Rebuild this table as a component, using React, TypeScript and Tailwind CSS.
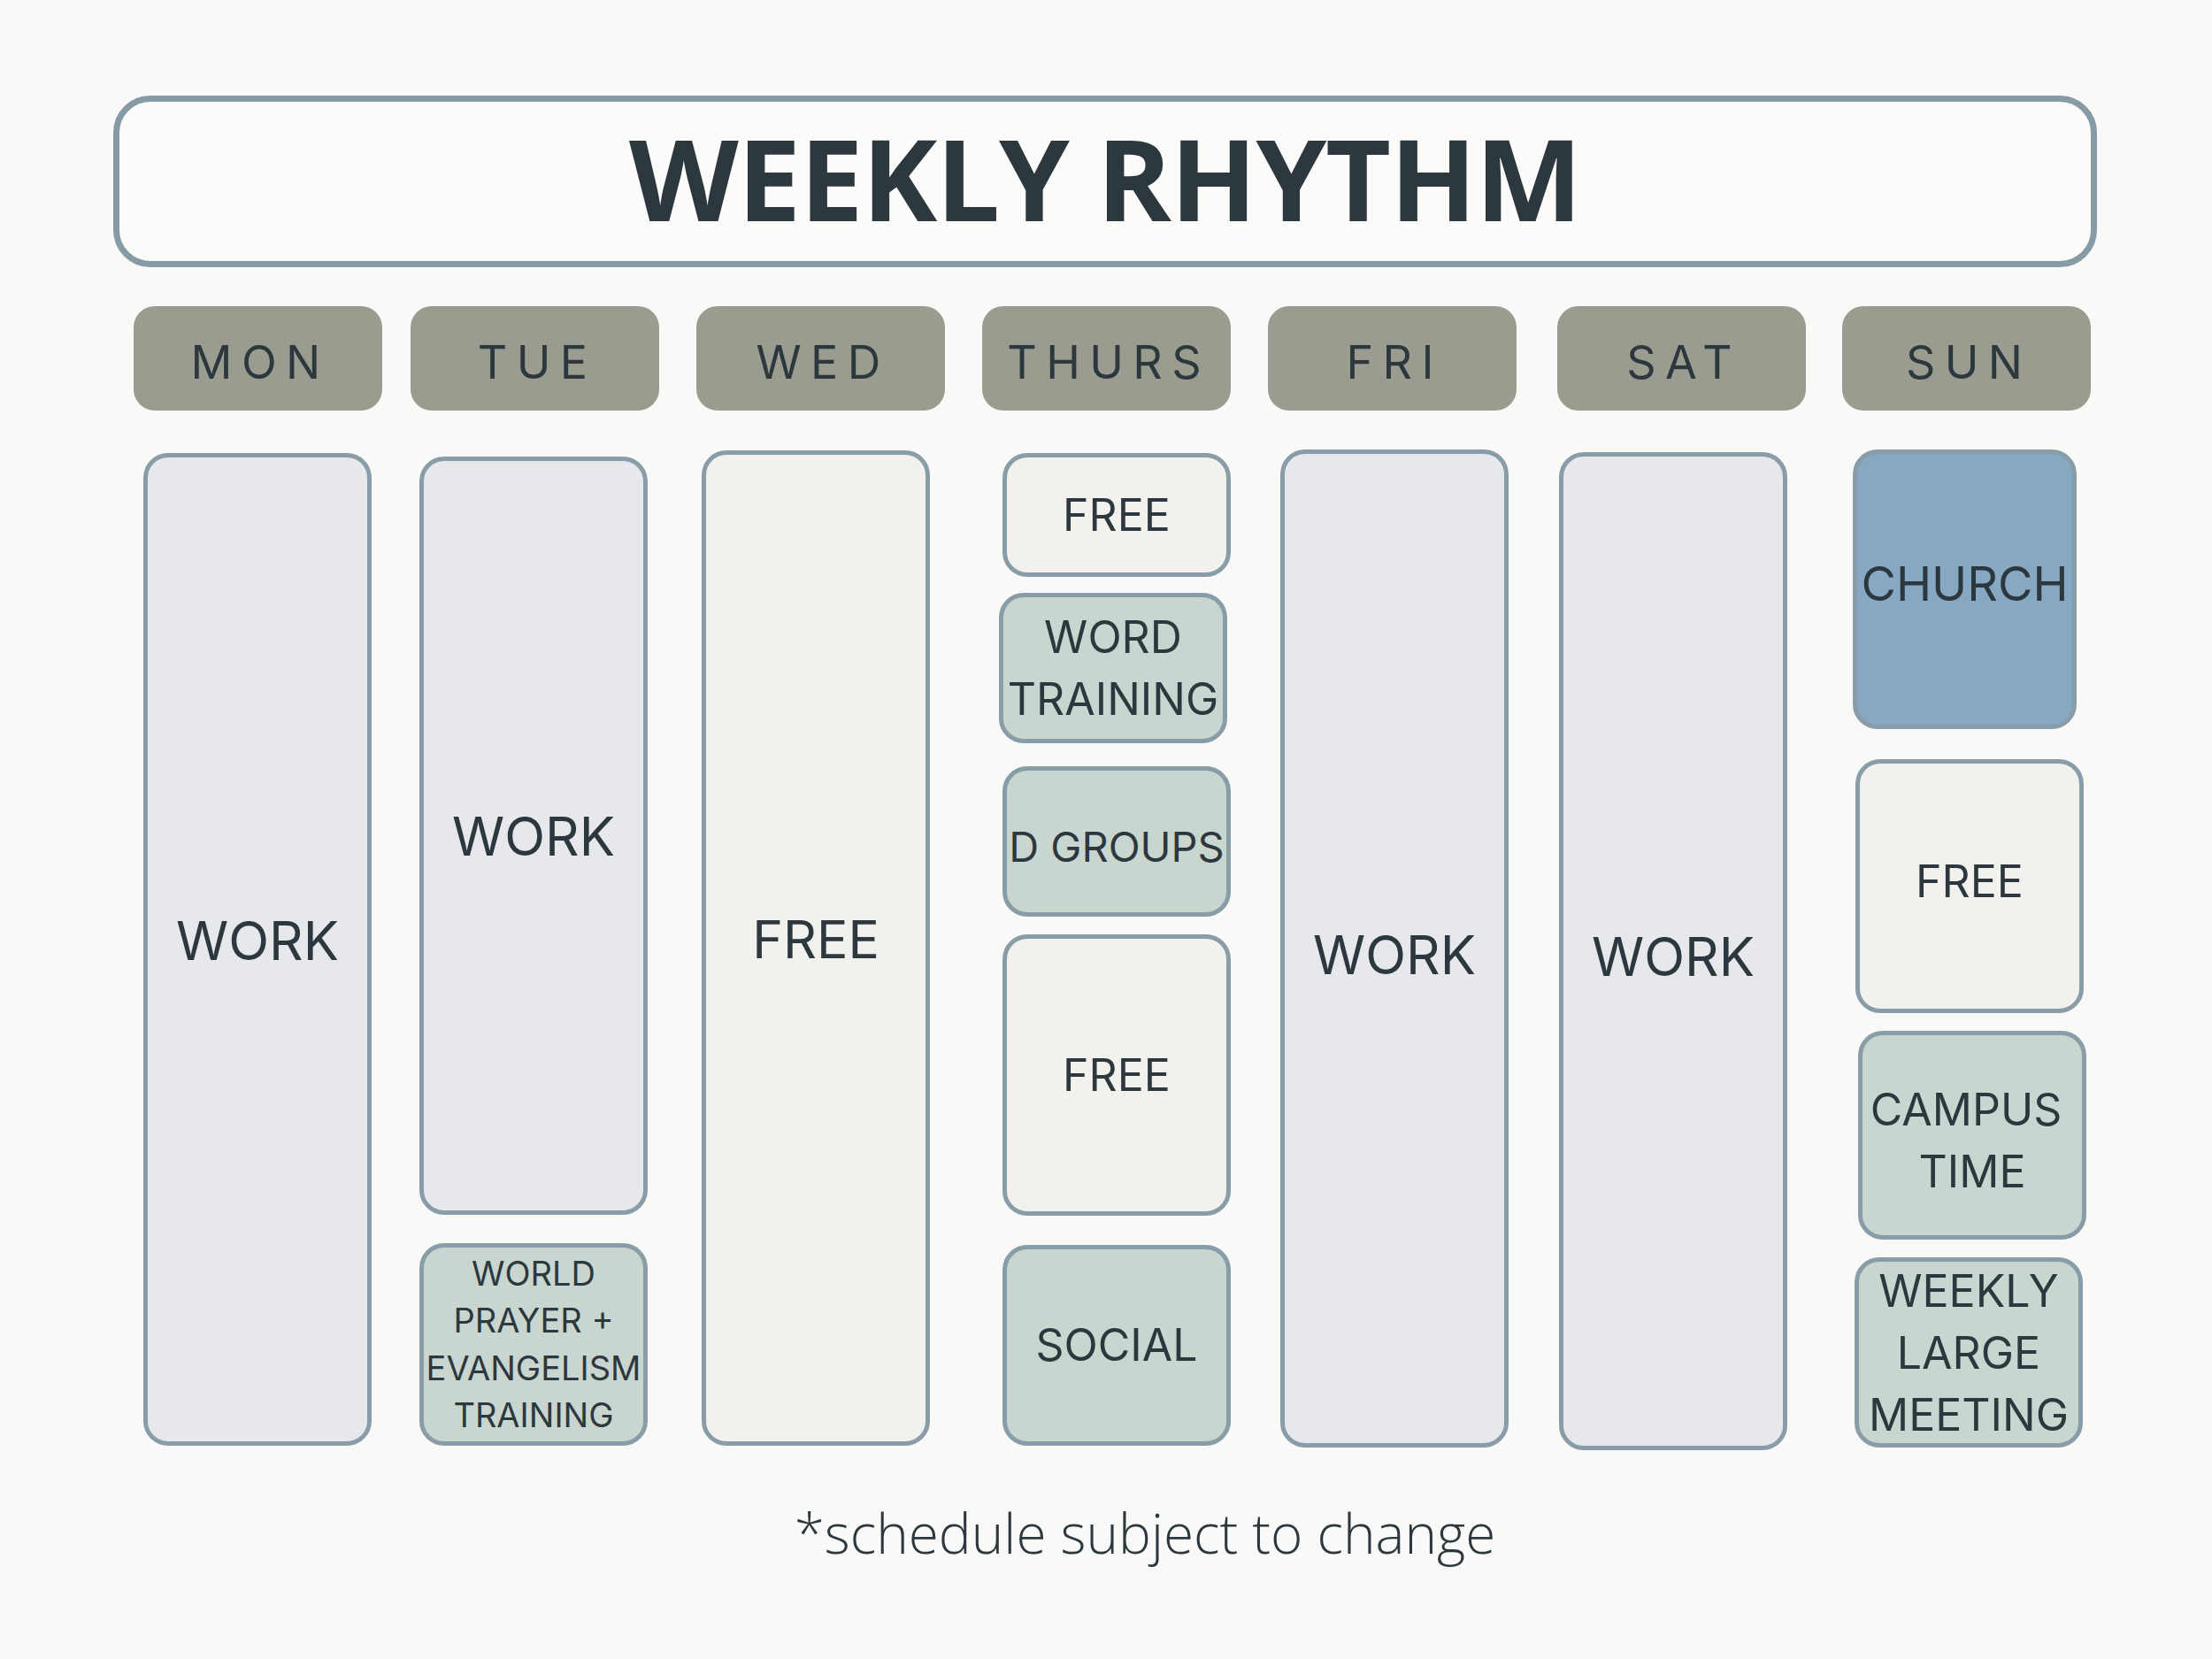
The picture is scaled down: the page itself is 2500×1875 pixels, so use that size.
import React from "react";

type BoxProps = {
  h: number;
  w?: string;
  mt: string;
  ml?: string;
  bg: string;
  text: string;
  children: React.ReactNode;
};

const Box = ({ h, w = "w-[258px]", mt, ml = "ml-0", bg, text, children }: BoxProps) => (
  <div
    className={`${w} ${mt} ${ml} ${bg} shrink-0 rounded-[28px] border-[5px] border-[#889da8] flex flex-col items-center justify-center text-center text-[#2d383e] leading-[1.3] ${text}`}
    style={{ height: h }}
  >
    {children}
  </div>
);

const WORK = "bg-[#e6e8ec]";
const FREE = "bg-[#f3f1ed]";
const SAGE = "bg-[#c9d6cf]";
const CHURCH = "bg-[#86a8c3]";

const days: { label: string; ml: string }[] = [
  { label: "MON", ml: "ml-[151px]" },
  { label: "TUE", ml: "ml-[32px]" },
  { label: "WED", ml: "ml-[42px]" },
  { label: "THURS", ml: "ml-[42px]" },
  { label: "FRI", ml: "ml-[42px]" },
  { label: "SAT", ml: "ml-[46px]" },
  { label: "SUN", ml: "ml-[41px]" },
];

export default function App() {
  return (
    <div
      className="w-[2500px] h-[1875px] bg-[#f9f9f7] pt-[108px] text-[#2d383e] overflow-hidden"
      style={{ fontFamily: "Inter, 'Noto Sans', sans-serif" }}
    >
      {/* Title */}
      <div className="ml-[128px] w-[2242px] h-[194px] rounded-[42px] border-[7px] border-[#879ba6] bg-[#fbfbfa] flex items-center justify-center pb-[9px]">
        <h1
          className="text-[128px] font-bold leading-none tracking-[-0.01em] text-[#2d383e]"
          style={{ fontFamily: "'Open Sans', sans-serif" }}
        >
          WEEKLY RHYTHM
        </h1>
      </div>

      {/* Day headers */}
      <div className="flex mt-[44px]">
        {days.map((d) => (
          <div
            key={d.label}
            className={`${d.ml} w-[281px] h-[118px] shrink-0 rounded-[24px] bg-[#9a9c8f] flex items-center justify-center pt-[10px]`}
          >
            <span className="text-[52px] font-normal tracking-[0.2em] leading-none pl-[0.1em]">
              {d.label}
            </span>
          </div>
        ))}
      </div>

      {/* Schedule body */}
      <div className="flex items-start mt-[36px]">
        {/* MON */}
        <div className="flex flex-col ml-[162px]">
          <Box h={1122} mt="mt-[12px]" bg={WORK} text="text-[60px] pb-[20px]">
            WORK
          </Box>
        </div>

        {/* TUE */}
        <div className="flex flex-col ml-[54px]">
          <Box h={857} mt="mt-[16px]" bg={WORK} text="text-[60px]">
            WORK
          </Box>
          <Box h={229} mt="mt-[32px]" bg={SAGE} text="text-[38px] leading-[1.4]">
            <span>WORLD</span>
            <span>PRAYER +</span>
            <span className="whitespace-nowrap">EVANGELISM</span>
            <span>TRAINING</span>
          </Box>
        </div>

        {/* WED */}
        <div className="flex flex-col ml-[61px]">
          <Box h={1125} mt="mt-[9px]" bg={FREE} text="text-[59px] pb-[18px]">
            FREE
          </Box>
        </div>

        {/* THURS */}
        <div className="flex flex-col ml-[82px] w-[258px]">
          <Box h={140} mt="mt-[12px]" bg={FREE} text="text-[50px]">
            FREE
          </Box>
          <Box h={170} mt="mt-[18px]" ml="-ml-[4px]" bg={SAGE} text="text-[50px] leading-[1.4]">
            <span>WORD</span>
            <span>TRAINING</span>
          </Box>
          <Box h={170} mt="mt-[26px]" bg={SAGE} text="text-[47px] pt-[12px]">
            <span className="whitespace-nowrap">D GROUPS</span>
          </Box>
          <Box h={318} mt="mt-[20px]" bg={FREE} text="text-[50px]">
            FREE
          </Box>
          <Box h={227} mt="mt-[33px]" bg={SAGE} text="text-[50px]">
            SOCIAL
          </Box>
        </div>

        {/* FRI */}
        <div className="flex flex-col ml-[56px]">
          <Box h={1128} mt="mt-[8px]" bg={WORK} text="text-[60px] pt-[14px]">
            WORK
          </Box>
        </div>

        {/* SAT */}
        <div className="flex flex-col ml-[57px]">
          <Box h={1128} mt="mt-[11px]" bg={WORK} text="text-[60px] pt-[11px]">
            WORK
          </Box>
        </div>

        {/* SUN */}
        <div className="flex flex-col ml-[76px] w-[264px]">
          <Box h={316} w="w-[253px]" mt="mt-[8px]" ml="-ml-[2px]" bg={CHURCH} text="text-[54px] pb-[12px]">
            CHURCH
          </Box>
          <Box h={287} mt="mt-[34px]" ml="ml-[1px]" bg={FREE} text="text-[50px] pb-[11px]">
            FREE
          </Box>
          <Box h={236} mt="mt-[20px]" ml="ml-[4px]" bg={SAGE} text="text-[50px] leading-[1.4] pt-[12px]">
            <span className="pr-[14px]">CAMPUS</span>
            <span>TIME</span>
          </Box>
          <Box h={215} mt="mt-[20px]" bg={SAGE} text="text-[50px] leading-[1.4]">
            <span>WEEKLY</span>
            <span>LARGE</span>
            <span>MEETING</span>
          </Box>
        </div>
      </div>

      {/* Footer */}
      <div className="flex justify-center mt-[62px] pl-[88px]">
        <p
          className="text-[62px] font-light leading-none text-[#2d383e]"
          style={{ fontFamily: "'Open Sans', sans-serif" }}
        >
          *schedule subject to change
        </p>
      </div>
    </div>
  );
}
